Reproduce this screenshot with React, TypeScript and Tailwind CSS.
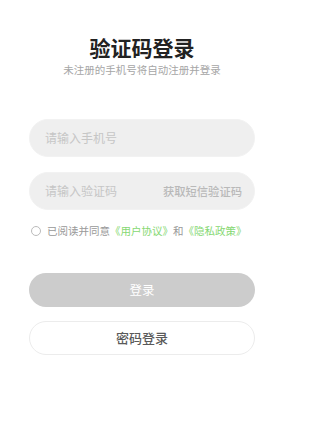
export default function App() {
  return (
    <div className="w-[311px] h-[436px] bg-white font-['Noto_Sans_CJK_SC',sans-serif]">
      <div className="ml-[29px] w-[226px] pt-[32px] flex flex-col">
        <h1 className="text-center text-[21px] leading-[30px] font-bold text-[#222]">验证码登录</h1>
        <p className="text-center text-[10.5px] leading-[14px] mt-[1px] text-[#a6a6a6]">未注册的手机号将自动注册并登录</p>

        <div className="mt-[42px] h-[38px] rounded-full bg-[#efefef] border border-[#f2f2f2] flex items-center px-[15px]">
          <span className="text-[12px] text-[#c6c6c6]">请输入手机号</span>
        </div>

        <div className="mt-[15px] h-[38px] rounded-full bg-[#efefef] border border-[#f2f2f2] flex items-center justify-between pl-[15px] pr-[12px]">
          <span className="text-[12px] text-[#c6c6c6]">请输入验证码</span>
          <span className="text-[11.3px] font-medium text-[#b9b9b9]">获取短信验证码</span>
        </div>

        <div className="mt-[14px] flex items-center">
          <span className="w-[10px] h-[10px] rounded-full border border-[#bbb] ml-[2px]" />
          <span className="ml-[6px] text-[10.5px] leading-[14px] text-[#999]">
            已阅读并同意<span className="text-[#86d872]">《用户协议》</span>和<span className="text-[#86d872]">《隐私政策》</span>
          </span>
        </div>

        <button className="mt-[35px] h-[34px] rounded-full bg-[#cccccc] text-white text-[12.5px]">登录</button>
        <button className="mt-[14px] h-[34px] rounded-full bg-white border border-[#ececec] text-[#5a5a5a] text-[13px] font-medium">密码登录</button>
      </div>
    </div>
  )
}
